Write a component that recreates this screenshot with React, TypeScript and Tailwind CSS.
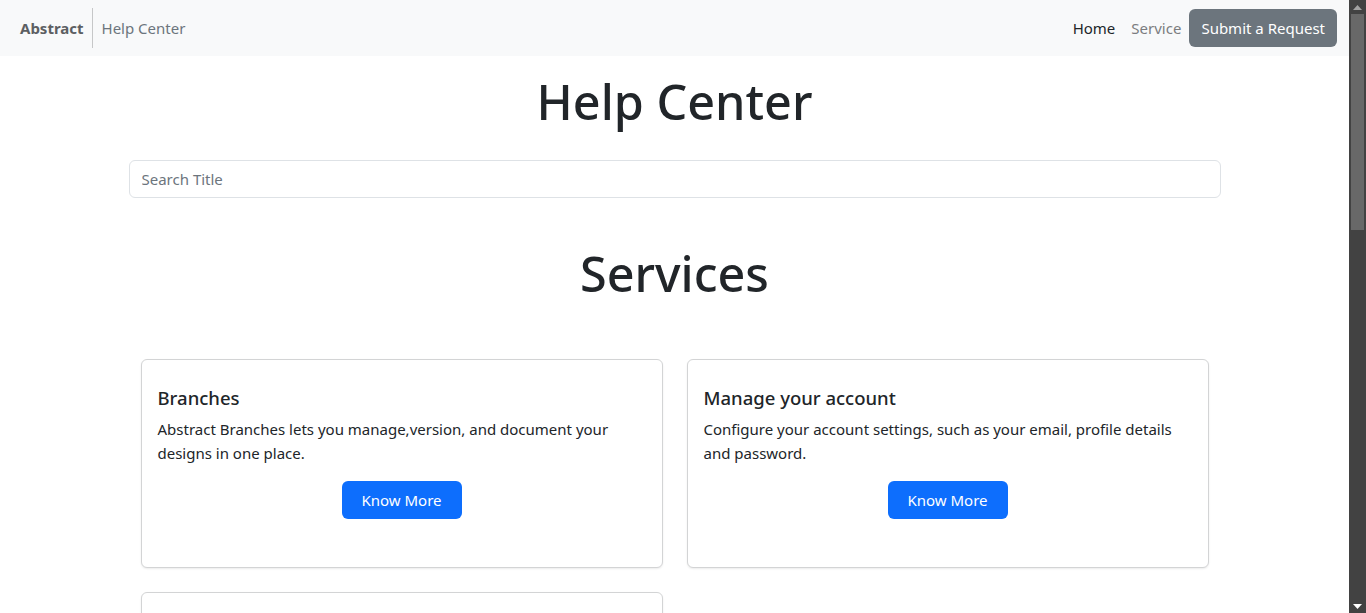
import React from "react";

const services = [
  {
    title: "Branches",
    text: "Abstract Branches lets you manage,version, and document your designs in one place.",
  },
  {
    title: "Manage your account",
    text: "Configure your account settings, such as your email, profile details and password.",
  },
  { title: "", text: "" },
];

function Navbar() {
  return (
    <nav className="flex h-14 shrink-0 items-center justify-between bg-[#f8f9fa] pl-5 pr-3">
      <div className="flex h-10 items-center">
        <span className="pr-2 text-[15px] font-bold text-[#5c5f62]">Abstract</span>
        <span className="h-10 w-px bg-[#c6c7c8]" />
        <span className="pl-[9px] text-[15px] text-[#6c757d]">Help Center</span>
      </div>
      <div className="flex items-center">
        <a className="px-2 text-[15px] text-[#212529]">Home</a>
        <a className="px-2 text-[15px] text-[#7b7d80]">Service</a>
        <button className="h-[38px] rounded-md bg-[#6c757d] px-3 text-[15px] text-white">
          Submit a Request
        </button>
      </div>
    </nav>
  );
}

function ServiceCard({ title, text }: { title: string; text: string }) {
  return (
    <div className="h-[209px] rounded-md border border-[#d3d4d5] bg-white shadow-[0_1px_2px_rgba(0,0,0,0.08)]">
      {title && (
        <div className="px-4 pt-[26px]">
          <h5 className="mb-[7px] text-[18.5px] font-medium leading-6 text-[#212529]">{title}</h5>
          <p className="text-[15px] leading-6 text-[#212529]">{text}</p>
          <div className="mt-4 flex justify-center">
            <button className="h-[38px] w-[120px] rounded-md bg-[#0d6efd] text-[15px] text-white">
              Know More
            </button>
          </div>
        </div>
      )}
    </div>
  );
}

function Scrollbar() {
  return (
    <div className="flex h-full w-[17px] shrink-0 flex-col items-center bg-[#424242]">
      <div className="flex h-[14px] items-center justify-center">
        <svg width="9" height="5" viewBox="0 0 9 5">
          <path d="M4.5 0 L9 5 L0 5 Z" fill="#a3a3a3" />
        </svg>
      </div>
      <div className="h-[216px] w-[13px] bg-[#686868]" />
      <div className="flex-1" />
      <div className="flex h-[14px] items-center justify-center">
        <svg width="9" height="5" viewBox="0 0 9 5">
          <path d="M0 0 L9 0 L4.5 5 Z" fill="#ffffff" />
        </svg>
      </div>
    </div>
  );
}

export default function App() {
  return (
    <div
      className="flex h-[613px] w-full overflow-hidden bg-white text-[#212529]"
      style={{ fontFamily: '"Noto Sans", "Open Sans", sans-serif' }}
    >
      <div className="flex min-w-0 flex-1 flex-col">
        <Navbar />
        <main className="flex flex-col items-center">
          <h1 className="mt-4 text-[48.5px] font-medium leading-[1.2] text-[#212529]">Help Center</h1>
          <input
            className="mt-[30px] h-[38px] w-[1092px] rounded-md border border-[#dee2e6] px-3 text-[15px] text-[#212529] placeholder:text-[#6c757d] outline-none"
            placeholder="Search Title"
          />
          <h2 className="mt-[46px] text-[48.5px] font-medium leading-[1.2] text-[#212529]">Services</h2>
          <div className="mt-[57px] grid w-[1068px] grid-cols-2 gap-6">
            {services.map((s, i) => (
              <ServiceCard key={i} title={s.title} text={s.text} />
            ))}
          </div>
        </main>
      </div>
      <Scrollbar />
    </div>
  );
}
